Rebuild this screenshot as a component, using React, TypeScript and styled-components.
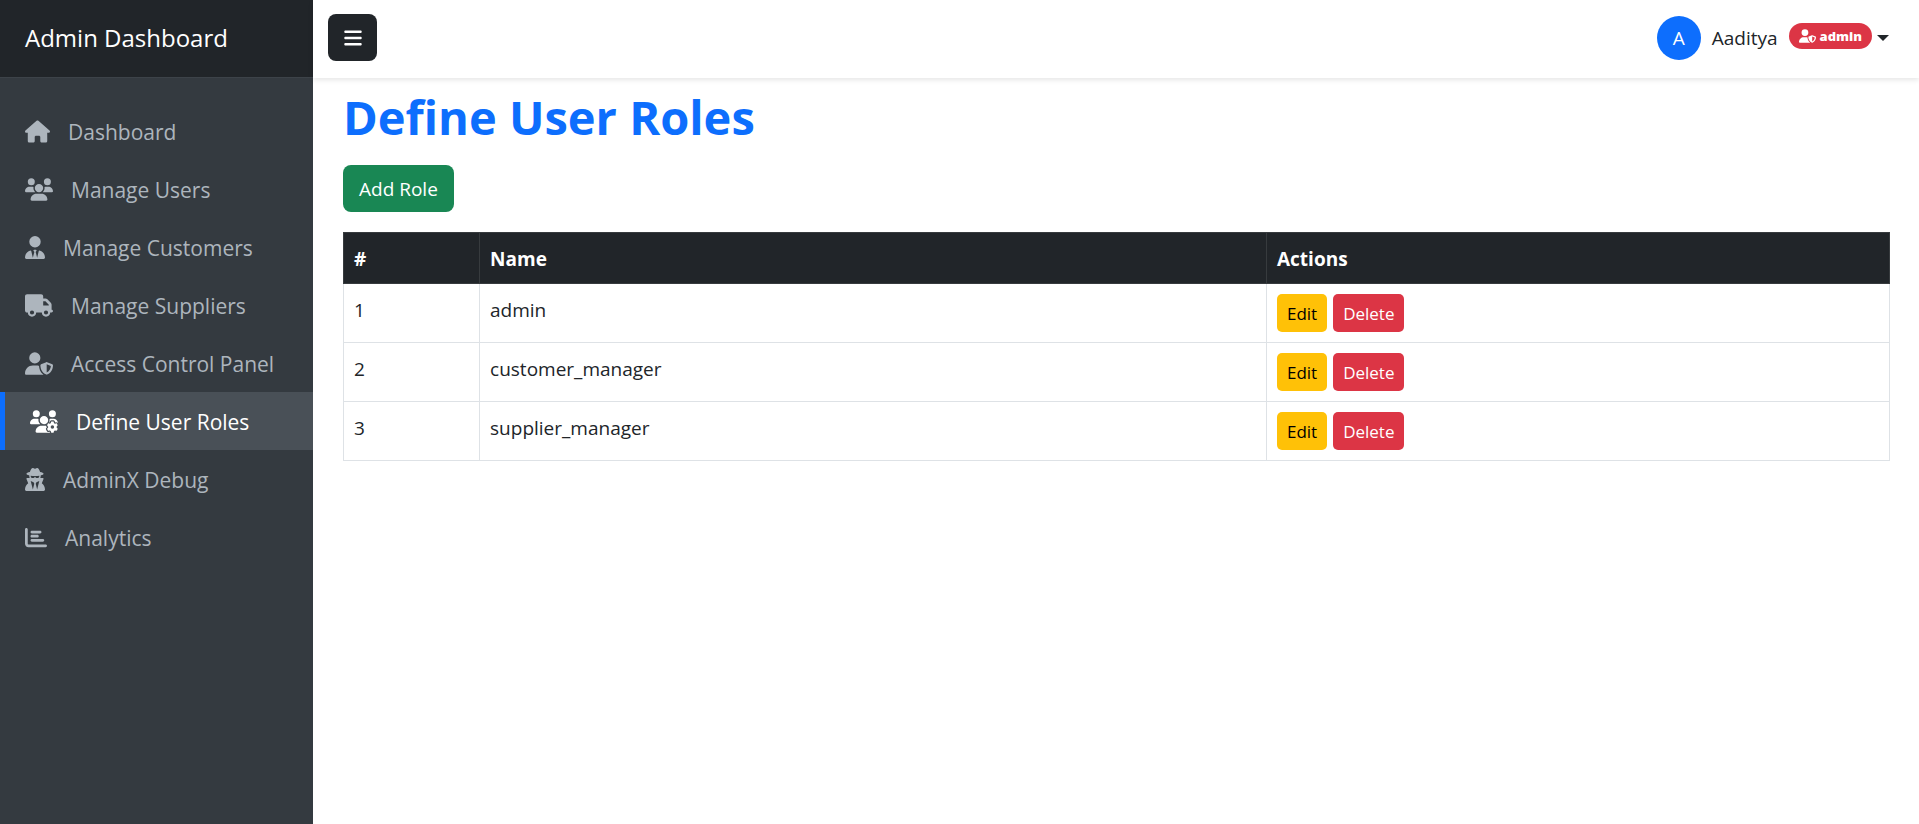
import React from 'react';
import styled, { createGlobalStyle } from 'styled-components';
import type { IconType } from 'react-icons';
import {
  FaBars,
  FaChartBar,
  FaHouse,
  FaTruck,
  FaUserSecret,
  FaUserShield,
  FaUserTie,
  FaUsers,
  FaUsersGear,
} from 'react-icons/fa6';

const GlobalStyle = createGlobalStyle`
  *, *::before, *::after { box-sizing: border-box; }
  body {
    margin: 0;
    background: #fff;
    color: #212529;
    font-family: "Segoe UI", "Open Sans", "Noto Sans", sans-serif;
    font-size: 19px;
    line-height: 30px;
  }
  button { font-family: inherit; cursor: pointer; }
`;

const Layout = styled.div`
  display: flex;
  min-height: 100vh;
`;

const Sidebar = styled.aside`
  flex: 0 0 313px;
  background: #343a40;
`;

const Brand = styled.div`
  padding: 20px 25px 21px;
  background: #212529;
  border-bottom: 1px solid #3d4349;
  color: #fff;
  font-size: 24px;
  line-height: 36px;
`;

const Nav = styled.nav`
  display: flex;
  flex-direction: column;
  padding-top: 24px;
`;

const NavLink = styled.a<{ $active?: boolean; $iconWidth: number }>`
  display: flex;
  align-items: center;
  gap: 18px;
  height: 58px;
  padding: 1px 25px 0;
  border-left: ${(p) => (p.$active ? '5px solid #0d6efd' : '0')};
  background: ${(p) => (p.$active ? '#495057' : 'transparent')};
  color: ${(p) => (p.$active ? '#fff' : '#adb5bd')};
  font-size: 21px;
  text-decoration: none;
  white-space: nowrap;

  svg {
    flex: none;
    width: ${(p) => p.$iconWidth}px;
    height: 23px;
  }
`;

const Main = styled.div`
  flex: 1;
  min-width: 0;
`;

const TopBar = styled.header`
  display: flex;
  align-items: center;
  justify-content: space-between;
  height: 78px;
  padding: 0 30px 3px 15px;
  background: #fff;
  box-shadow: 0 2px 5px rgba(0, 0, 0, 0.1);
`;

const MenuButton = styled.button`
  display: flex;
  align-items: center;
  justify-content: center;
  width: 49px;
  height: 47px;
  padding: 0;
  border: 0;
  border-radius: 8px;
  background: #212529;
  color: #fff;
  font-size: 20px;
`;

const UserMenu = styled.button`
  display: flex;
  align-items: center;
  padding: 0;
  border: 0;
  background: transparent;
  color: #212529;
`;

const Avatar = styled.span`
  display: flex;
  align-items: center;
  justify-content: center;
  width: 44px;
  height: 44px;
  border-radius: 50%;
  background: #0d6efd;
  color: #fff;
  font-size: 19px;
`;

const UserName = styled.span`
  margin: 0 11px;
  font-size: 19px;
  font-weight: 500;
`;

const Badge = styled.span`
  display: flex;
  align-items: center;
  gap: 4px;
  height: 26px;
  margin-bottom: 3px;
  padding: 0 10px;
  border-radius: 13px;
  background: #dc3545;
  color: #fff;
  font-size: 13px;
  font-weight: 800;

  svg {
    width: 17px;
    height: 14px;
  }
`;

const Caret = styled.span`
  margin-left: 5px;
  border-top: 6px solid currentColor;
  border-left: 6px solid transparent;
  border-right: 6px solid transparent;
`;

const Content = styled.main`
  padding: 10px 29px 10px 30px;
`;

const Title = styled.h1`
  margin: 0 0 19px;
  color: #0d6efd;
  font-size: 47px;
  font-weight: 700;
  line-height: 58px;
`;

const AddButton = styled.button`
  height: 47px;
  padding: 0 16px;
  border: 0;
  border-radius: 8px;
  background: #198754;
  color: #fff;
  font-size: 19px;
`;

const Table = styled.table`
  width: 100%;
  margin-top: 20px;
  border-collapse: collapse;
  table-layout: fixed;
`;

const HeadCell = styled.th<{ $width?: string }>`
  width: ${(p) => p.$width ?? 'auto'};
  height: 51px;
  padding: 1px 10px 0;
  border: 1px solid #373b3e;
  background: #212529;
  color: #fff;
  font-weight: 700;
  text-align: left;
`;

const Cell = styled.td`
  height: 59px;
  padding: 10px;
  border: 1px solid #dee2e6;
  vertical-align: top;
  line-height: 32px;
`;

const Actions = styled.div`
  display: flex;
  gap: 6px;
`;

const ActionButton = styled.button<{ $tone: 'edit' | 'delete' }>`
  height: 38px;
  padding: 0 10px;
  border: 0;
  border-radius: 5px;
  background: ${(p) => (p.$tone === 'edit' ? '#ffc107' : '#dc3545')};
  color: ${(p) => (p.$tone === 'edit' ? '#000' : '#fff')};
  font-size: 17px;
`;

const links: { label: string; icon: IconType; iconWidth: number; active?: boolean }[] = [
  { label: 'Dashboard', icon: FaHouse, iconWidth: 25 },
  { label: 'Manage Users', icon: FaUsers, iconWidth: 28 },
  { label: 'Manage Customers', icon: FaUserTie, iconWidth: 20 },
  { label: 'Manage Suppliers', icon: FaTruck, iconWidth: 28 },
  { label: 'Access Control Panel', icon: FaUserShield, iconWidth: 28 },
  { label: 'Define User Roles', icon: FaUsersGear, iconWidth: 28, active: true },
  { label: 'AdminX Debug', icon: FaUserSecret, iconWidth: 20 },
  { label: 'Analytics', icon: FaChartBar, iconWidth: 22 },
];

const roles = ['admin', 'customer_manager', 'supplier_manager'];

export default function App() {
  return (
    <>
      <GlobalStyle />
      <Layout>
        <Sidebar>
          <Brand>Admin Dashboard</Brand>
          <Nav>
            {links.map(({ label, icon: Icon, iconWidth, active }) => (
              <NavLink
                key={label}
                href="#"
                $active={active}
                $iconWidth={iconWidth}
                aria-current={active ? 'page' : undefined}
              >
                <Icon aria-hidden />
                {label}
              </NavLink>
            ))}
          </Nav>
        </Sidebar>
        <Main>
          <TopBar>
            <MenuButton type="button" aria-label="Toggle sidebar">
              <FaBars />
            </MenuButton>
            <UserMenu type="button" aria-haspopup="menu">
              <Avatar>A</Avatar>
              <UserName>Aaditya</UserName>
              <Badge>
                <FaUserShield aria-hidden />
                admin
              </Badge>
              <Caret />
            </UserMenu>
          </TopBar>
          <Content>
            <Title>Define User Roles</Title>
            <AddButton type="button">Add Role</AddButton>
            <Table>
              <thead>
                <tr>
                  <HeadCell scope="col" $width="8.8%">#</HeadCell>
                  <HeadCell scope="col" $width="50.9%">Name</HeadCell>
                  <HeadCell scope="col">Actions</HeadCell>
                </tr>
              </thead>
              <tbody>
                {roles.map((role, i) => (
                  <tr key={role}>
                    <Cell>{i + 1}</Cell>
                    <Cell>{role}</Cell>
                    <Cell>
                      <Actions>
                        <ActionButton type="button" $tone="edit">Edit</ActionButton>
                        <ActionButton type="button" $tone="delete">Delete</ActionButton>
                      </Actions>
                    </Cell>
                  </tr>
                ))}
              </tbody>
            </Table>
          </Content>
        </Main>
      </Layout>
    </>
  );
}
